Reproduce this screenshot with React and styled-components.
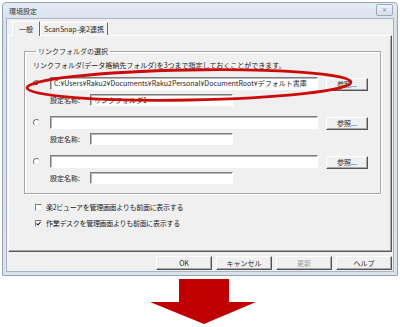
import React from 'react';
import styled, { createGlobalStyle } from 'styled-components';

const GlobalStyle = createGlobalStyle`
  html, body {
    margin: 0;
    padding: 0;
    background: #ffffff;
  }
  body {
    font-family: "Noto Sans CJK JP", "Noto Sans", sans-serif;
    font-size: 7px;
    color: #222222;
  }
`;

const Page = styled.div`
  width: 400px;
  height: 327px;
  padding: 2px 0 0 2px;
  box-sizing: border-box;
  display: flex;
  flex-direction: column;
  align-items: flex-start;
`;

const Window = styled.div`
  position: relative;
  width: 396px;
  height: 274px;
  box-sizing: border-box;
  border: 1px solid #97a3b1;
  border-radius: 4px 4px 0 0;
  background: linear-gradient(#e4ecf5, #d6e0ec 20px, #d9e2ed);
  display: flex;
  flex-direction: column;
  padding: 0 3px 3px 3px;
`;

const TitleBar = styled.div`
  height: 19px;
  display: flex;
  align-items: center;
  justify-content: space-between;
  padding-left: 3px;
  font-size: 7px;
  color: #3a3a3a;
`;

const CloseButton = styled.div`
  width: 15px;
  height: 10px;
  margin-right: 1px;
  margin-top: -2px;
  border: 1px solid #9aa8ba;
  border-radius: 2px;
  background: linear-gradient(#eef3f9, #d5dfeb);
  color: #8592a3;
  font-size: 6px;
  line-height: 10px;
  text-align: center;
`;

const Client = styled.div`
  flex: 1;
  background: #f0f0f0;
  border: 1px solid #a9b4c2;
  display: flex;
  flex-direction: column;
  padding: 0 1px 1px 1px;
`;

const TabRow = styled.div`
  height: 16px;
  display: flex;
  align-items: flex-end;
  padding-left: 4px;
`;

const Tab = styled.div`
  height: ${(p) => (p.$active ? 15 : 13)}px;
  padding: 0 ${(p) => (p.$active ? 6 : 3)}px;
  box-sizing: border-box;
  display: flex;
  align-items: center;
  font-size: 7px;
  background: #f0f0f0;
  border-left: 1px solid #ffffff;
  border-top: 1px solid #ffffff;
  border-right: 1px solid #6a6a6a;
  margin-bottom: ${(p) => (p.$active ? -1 : 0)}px;
  position: relative;
  z-index: ${(p) => (p.$active ? 1 : 0)};
  color: #2a2a2a;
`;

const TabPanel = styled.div`
  height: 217px;
  box-sizing: border-box;
  border-top: 1px solid #ffffff;
  border-left: 1px solid #ffffff;
  border-right: 1px solid #5a5a5a;
  border-bottom: 1px solid #5a5a5a;
  box-shadow: inset -1px -1px 0 #a8a8a8;
  padding: 11px 12px 0 15px;
  display: flex;
  flex-direction: column;
`;

const GroupBox = styled.fieldset`
  margin: 0;
  min-width: 0;
  width: 357px;
  box-sizing: border-box;
  border: 1px solid #a6a6a6;
  box-shadow: inset 1px 1px 0 #ffffff, 1px 1px 0 #ffffff;
  padding: 4px 0 9px 8px;
  display: flex;
  flex-direction: column;
`;

const Legend = styled.legend`
  font-size: 7px;
  line-height: 9px;
  padding: 0 2px;
  margin-left: 3px;
  color: #2a2a2a;
`;

const Description = styled.div`
  height: 10px;
  line-height: 10px;
  white-space: nowrap;
`;

const Blocks = styled.div`
  display: flex;
  flex-direction: column;
  gap: 10px;
  margin-top: 7px;
`;

const FolderBlock = styled.div`
  display: flex;
  flex-direction: column;
  gap: 4px;
`;

const FolderRow = styled.div`
  height: 13px;
  display: flex;
  align-items: center;
`;

const Radio = styled.span`
  width: 7px;
  height: 7px;
  box-sizing: border-box;
  border-radius: 50%;
  border: 1px solid;
  border-color: #7a7a7a #e8e8e8 #e8e8e8 #7a7a7a;
  background: #ffffff;
  display: flex;
  align-items: center;
  justify-content: center;
  margin-right: 10px;
  flex-shrink: 0;

  &::after {
    content: '';
    width: 3px;
    height: 3px;
    border-radius: 50%;
    background: ${(p) => (p.$checked ? '#222222' : 'transparent')};
  }
`;

const TextField = styled.div`
  width: ${(p) => p.$width}px;
  height: ${(p) => p.$height || 13}px;
  box-sizing: border-box;
  background: #ffffff;
  border-top: 1px solid #7d7d7d;
  border-left: 1px solid #7d7d7d;
  border-right: 1px solid #ffffff;
  border-bottom: 1px solid #ffffff;
  box-shadow: inset 1px 1px 0 #b8b8b8;
  padding-left: 3px;
  font-size: 7px;
  line-height: 11px;
  white-space: nowrap;
  overflow: hidden;
  color: #1a1a1a;
  flex-shrink: 0;
`;

const BrowseButton = styled.div`
  width: 42px;
  height: 13px;
  margin-left: 8px;
  margin-top: 1px;
  box-sizing: border-box;
  border-top: 1px solid #ffffff;
  border-left: 1px solid #ffffff;
  border-right: 1px solid #555555;
  border-bottom: 1px solid #555555;
  box-shadow: inset -1px -1px 0 #a8a8a8;
  display: flex;
  align-items: center;
  justify-content: center;
  font-size: 7px;
  color: #2a2a2a;
`;

const NameRow = styled.div`
  height: 12px;
  display: flex;
  align-items: center;
  padding-left: 17px;
`;

const NameLabel = styled.span`
  width: 40px;
  font-size: 7px;
  white-space: nowrap;
`;

const CheckList = styled.div`
  display: flex;
  flex-direction: column;
  gap: 6px;
  margin-top: 8px;
  padding-left: 11px;
`;

const CheckRow = styled.div`
  height: 10px;
  display: flex;
  align-items: center;
  gap: 4px;
  white-space: nowrap;
  letter-spacing: -0.3px;
`;

const CheckBox = styled.span`
  width: 7px;
  height: 7px;
  box-sizing: border-box;
  border: 1px solid;
  border-color: #7a7a7a #e8e8e8 #e8e8e8 #7a7a7a;
  background: #ffffff;
  display: flex;
  align-items: center;
  justify-content: center;
  flex-shrink: 0;
`;

const ButtonRow = styled.div`
  display: flex;
  justify-content: flex-end;
  gap: 4px;
  margin-top: 4px;
`;

const DialogButton = styled.div`
  width: 56px;
  height: 14px;
  box-sizing: border-box;
  border-top: 1px solid #ffffff;
  border-left: 1px solid #ffffff;
  border-right: 1px solid #555555;
  border-bottom: 1px solid #555555;
  box-shadow: inset -1px -1px 0 #a8a8a8;
  display: flex;
  align-items: center;
  justify-content: center;
  font-size: 7px;
  color: ${(p) => (p.$disabled ? '#a0a0a0' : '#2a2a2a')};
`;

const Highlight = styled.svg`
  position: absolute;
  left: 20px;
  top: 64px;
  overflow: visible;
`;

const Arrow = styled.svg`
  margin: 3px 0 0 148px;
`;

const folders = [
  { path: 'C:¥Users¥Raku2¥Documents¥Raku2Personal¥DocumentRoot¥デフォルト書庫', name: 'リンクフォルダ1', checked: true },
  { path: '', name: '', checked: false },
  { path: '', name: '', checked: false },
];

const App = () => {
  return (
    <Page>
      <GlobalStyle />
      <Window>
        <TitleBar>
          <span>環境設定</span>
          <CloseButton>✕</CloseButton>
        </TitleBar>
        <Client>
          <TabRow>
            <Tab $active>一般</Tab>
            <Tab>ScanSnap-楽2連携</Tab>
          </TabRow>
          <TabPanel>
            <GroupBox>
              <Legend>リンクフォルダの選択</Legend>
              <Description>リンクフォルダ(データ格納先フォルダ)を3つまで指定しておくことができます。</Description>
              <Blocks>
                {folders.map((f, i) => (
                  <FolderBlock key={i}>
                    <FolderRow>
                      <Radio $checked={f.checked} />
                      <TextField $width={268}>{f.path}</TextField>
                      <BrowseButton>参照...</BrowseButton>
                    </FolderRow>
                    <NameRow>
                      <NameLabel>設定名称:</NameLabel>
                      <TextField $width={143} $height={12}>{f.name}</TextField>
                    </NameRow>
                  </FolderBlock>
                ))}
              </Blocks>
            </GroupBox>
            <CheckList>
              <CheckRow>
                <CheckBox />
                楽2ビューアを管理画面よりも前面に表示する
              </CheckRow>
              <CheckRow>
                <CheckBox>
                  <svg width="5" height="5" viewBox="0 0 5 5">
                    <path d="M0.5 2.5 L2 4 L4.6 0.8" fill="none" stroke="#222" strokeWidth="1.1" />
                  </svg>
                </CheckBox>
                作業デスクを管理画面よりも前面に表示する
              </CheckRow>
            </CheckList>
          </TabPanel>
          <ButtonRow>
            <DialogButton>OK</DialogButton>
            <DialogButton>キャンセル</DialogButton>
            <DialogButton $disabled>更新</DialogButton>
            <DialogButton>ヘルプ</DialogButton>
          </ButtonRow>
        </Client>
        <Highlight width="336" height="38" viewBox="0 0 336 38">
          <ellipse cx="166" cy="18" rx="162" ry="15" fill="none" stroke="#cc0a0a" strokeWidth="2.8" transform="rotate(-1 166 18)" />
        </Highlight>
      </Window>
      <Arrow width="106" height="46" viewBox="0 0 106 46">
        <path d="M29 0 H79 V23 H106 L54 45 L0 23 H29 Z" fill="#c00000" />
      </Arrow>
    </Page>
  );
};

export default App;
